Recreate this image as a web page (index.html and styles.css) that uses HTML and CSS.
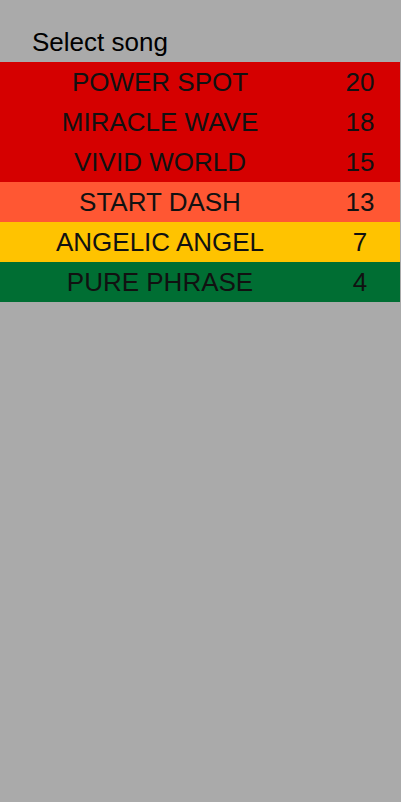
FILE: index.html
```html
<!DOCTYPE html>
<html>
<head>
<meta charset="utf-8">
<link rel="stylesheet" href="styles.css">
</head>
<body>
<div class="page">
  <div class="title">Select song</div>
  <div class="list">
    <div class="row red"><span class="name">POWER SPOT</span><span class="num">20</span></div>
    <div class="row red"><span class="name">MIRACLE WAVE</span><span class="num">18</span></div>
    <div class="row red"><span class="name">VIVID WORLD</span><span class="num">15</span></div>
    <div class="row orange"><span class="name">START DASH</span><span class="num">13</span></div>
    <div class="row yellow"><span class="name">ANGELIC ANGEL</span><span class="num">7</span></div>
    <div class="row green"><span class="name">PURE PHRASE</span><span class="num">4</span></div>
  </div>
</div>
</body>
</html>
```
FILE: styles.css
```css
html, body {
  margin: 0;
  padding: 0;
  background: #aaaaaa;
}
.page {
  width: 400px;
  min-height: 802px;
  background: #aaaaaa;
  font-family: "Liberation Sans", Arial, sans-serif;
  color: #000;
}
.title {
  height: 62px;
  box-sizing: border-box;
  padding: 27px 0 0 32px;
  font-size: 26px;
  line-height: 30px;
}
.list {
  display: flex;
  flex-direction: column;
}
.row {
  display: grid;
  grid-template-columns: 320px 80px;
  height: 40px;
  align-items: center;
  font-size: 26px;
  color: #111;
}
.name, .num {
  text-align: center;
}
.red { background: #d50000; }
.orange { background: #ff5733; }
.yellow { background: #ffc300; }
.green { background: #006e33; }
```
